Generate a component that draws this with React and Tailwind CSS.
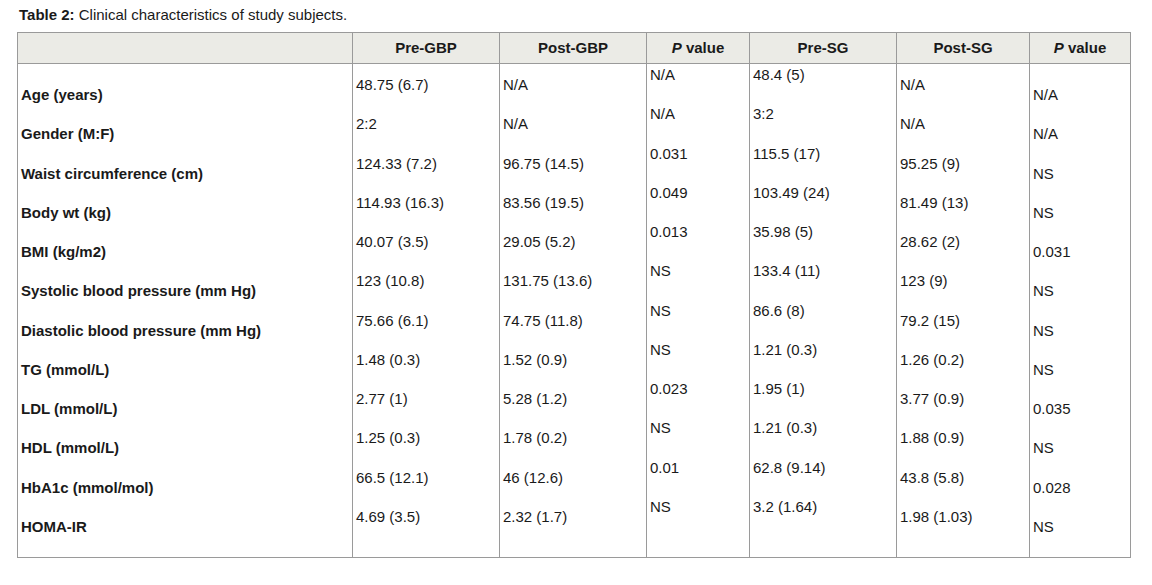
const cols = [
  {
    head: "",
    pt: "pt-[23px]",
    bold: true,
    items: [
      "Age (years)",
      "Gender (M:F)",
      "Waist circumference (cm)",
      "Body wt (kg)",
      "BMI (kg/m2)",
      "Systolic blood pressure (mm Hg)",
      "Diastolic blood pressure (mm Hg)",
      "TG (mmol/L)",
      "LDL (mmol/L)",
      "HDL (mmol/L)",
      "HbA1c (mmol/mol)",
      "HOMA-IR",
    ],
  },
  {
    head: "Pre-GBP",
    pt: "pt-[13px]",
    items: ["48.75 (6.7)", "2:2", "124.33 (7.2)", "114.93 (16.3)", "40.07 (3.5)", "123 (10.8)", "75.66 (6.1)", "1.48 (0.3)", "2.77 (1)", "1.25 (0.3)", "66.5 (12.1)", "4.69 (3.5)"],
  },
  {
    head: "Post-GBP",
    pt: "pt-[13px]",
    items: ["N/A", "N/A", "96.75 (14.5)", "83.56 (19.5)", "29.05 (5.2)", "131.75 (13.6)", "74.75 (11.8)", "1.52 (0.9)", "5.28 (1.2)", "1.78 (0.2)", "46 (12.6)", "2.32 (1.7)"],
  },
  {
    head: "p",
    pt: "pt-[3px]",
    items: ["N/A", "N/A", "0.031", "0.049", "0.013", "NS", "NS", "NS", "0.023", "NS", "0.01", "NS"],
  },
  {
    head: "Pre-SG",
    pt: "pt-[3px]",
    items: ["48.4 (5)", "3:2", "115.5 (17)", "103.49 (24)", "35.98 (5)", "133.4 (11)", "86.6 (8)", "1.21 (0.3)", "1.95 (1)", "1.21 (0.3)", "62.8 (9.14)", "3.2 (1.64)"],
  },
  {
    head: "Post-SG",
    pt: "pt-[13px]",
    items: ["N/A", "N/A", "95.25 (9)", "81.49 (13)", "28.62 (2)", "123 (9)", "79.2 (15)", "1.26 (0.2)", "3.77 (0.9)", "1.88 (0.9)", "43.8 (5.8)", "1.98 (1.03)"],
  },
  {
    head: "p",
    pt: "pt-[23px]",
    items: ["N/A", "N/A", "NS", "NS", "0.031", "NS", "NS", "NS", "0.035", "NS", "0.028", "NS"],
  },
];

function Head({ label }) {
  if (label === "p") {
    return (
      <span>
        <i>P</i> value
      </span>
    );
  }
  return <span>{label}</span>;
}

export default function App() {
  return (
    <div className="w-[1152px] h-[585px] bg-white text-[#1a1a1a] text-[15px] pt-[7px] font-['Liberation_Sans',Arial,sans-serif]">
      <p className="pl-[19px] leading-[16px]">
        <b>Table 2:</b> Clinical characteristics of study subjects.
      </p>
      <div className="ml-[17px] mt-[9px] w-fit grid grid-cols-[335px_147px_147px_103px_147px_133px_101px] border-l border-t border-[#9a9a9a]">
        {cols.map((c, i) => (
          <div
            key={"h" + i}
            className="h-[31px] bg-[#ebebe6] border-r border-b border-[#9a9a9a] flex items-center justify-center font-bold leading-[16px]"
          >
            <Head label={c.head} />
          </div>
        ))}
        {cols.map((c, i) => (
          <div
            key={"b" + i}
            className={`h-[494px] border-r border-b border-[#9a9a9a] pl-[3px] ${c.pt} ${c.bold ? "font-bold" : ""}`}
          >
            {c.items.map((t, j) => (
              <div key={j} className="h-[39.25px] leading-[16px] whitespace-nowrap">
                {t}
              </div>
            ))}
          </div>
        ))}
      </div>
    </div>
  );
}
